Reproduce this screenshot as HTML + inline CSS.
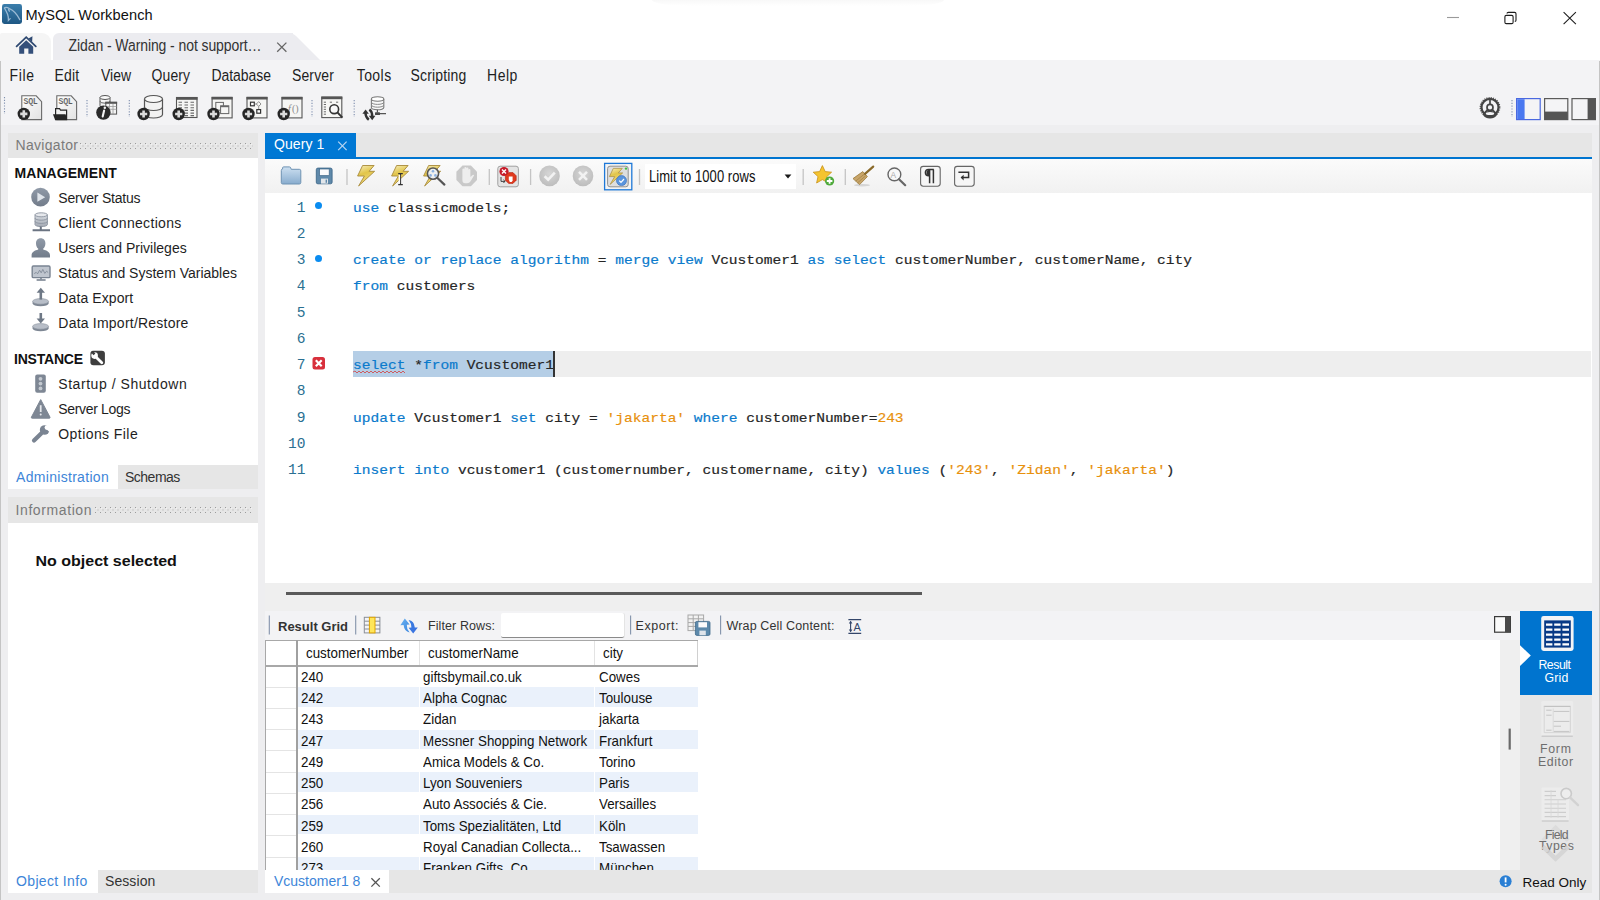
<!DOCTYPE html>
<html><head><meta charset="utf-8">
<style>
*{margin:0;padding:0;box-sizing:border-box}
html,body{width:1600px;height:900px;overflow:hidden}
body{position:relative;background:#eeeef0;font-family:"Liberation Sans",sans-serif;color:#1e1e1e}
.a{position:absolute}
.t{position:absolute;white-space:pre;line-height:1}
.g{font-size:14.3px;color:#111;transform:scaleX(0.935);transform-origin:0 0}
.mono{font-family:"Liberation Mono",monospace;-webkit-text-stroke:0.2px currentColor;transform:scaleY(0.93);transform-origin:0 11px}
svg{position:absolute;overflow:visible}
</style></head><body>

<!-- ===== title bar ===== -->
<div class="a" style="left:0;top:0;width:1600px;height:60px;background:#fff"></div>
<div class="a" style="left:2px;top:4px;width:19.5px;height:19.6px;border-radius:2.4px;background:linear-gradient(#3b7eac,#1f5884)"></div>
<span class="t" style="left:25.50px;top:8px;font-size:14.6px;color:#111;letter-spacing:0.107px;transform:scaleY(1.04);transform-origin:0 12.4px">MySQL Workbench</span>

<div class="a" style="left:652px;top:0;width:292px;height:6px;background:linear-gradient(#f8f8f8,#fff);border-radius:0 0 40px 40px/0 0 6px 6px"></div>
<!-- ===== tab strip ===== -->
<div class="a" style="left:0;top:33px;width:51px;height:27px;background:#f5f5f5;border-top-right-radius:9px;border-top-left-radius:2px"></div>
<div class="a" style="left:53px;top:33px;width:240px;height:27px;background:#ececf0;border-top-left-radius:6px"></div>
<svg style="left:0;top:0" width="1600" height="70"><path d="M288 33 Q293 33 296 36 L320 60 L288 60 Z" fill="#ececf0"/></svg>
<span class="t" style="left:68.60px;top:38.70px;font-size:14px;color:#333;letter-spacing:-0.090px;transform:scaleY(1.12);transform-origin:0 12px">Zidan - Warning - not support…</span>

<!-- title / tab icons -->
<svg style="left:0;top:0" width="1600" height="62">
<path d="M4.4 8Q6.2 6.6 9.4 8.6Q15.6 11.2 19.8 19.6M4.4 8Q6.4 11.4 7.6 14.2Q8.6 17 8.4 20.4L10.2 18.6M8.6 9.6L9.4 11.2" fill="none" stroke="#a6c2da" stroke-width="1.25" stroke-linecap="round" opacity="0.9"/>
<path d="M1447 17.5H1459" stroke="#9a9a9a" stroke-width="1.1"/>
<rect x="1504.9" y="15.4" width="8.2" height="8.2" rx="1.4" fill="none" stroke="#1e1e1e" stroke-width="1.1"/>
<path d="M1507 13.6Q1507 12.4 1508.4 12.4H1514.6Q1516 12.4 1516 13.8V20.2Q1516 21.4 1514.8 21.4" fill="none" stroke="#1e1e1e" stroke-width="1.1"/>
<path d="M1563.6 12.1L1575.9 24.1M1575.9 12.1L1563.6 24.1" stroke="#1e1e1e" stroke-width="1.1"/>
<!-- house -->
<path d="M16.6 46.4L26.2 37.2L35.8 46.4" fill="none" stroke="#2f4a72" stroke-width="1.8" stroke-linecap="round"/>
<path d="M29.6 38.6L31.8 37.4L31.6 40.6Z" fill="#2f4a72" stroke="#2f4a72" stroke-width="1.2"/>
<path d="M19.2 46.8L26.2 40.2L33.2 46.8V53.8H28.4V48.4H24.2V53.8H19.2Z" fill="#35507a"/>
<!-- tab close -->
<path d="M277.2 42.6L286.4 51.8M286.4 42.6L277.2 51.8" stroke="#666" stroke-width="1.3"/>
</svg>

<!-- ===== menu + toolbar bg ===== -->
<div class="a" style="left:0;top:60px;width:1600px;height:65px;background:#f3f3f5"></div>
<span class="t" style="left:9.50px;top:68.50px;font-size:14px;letter-spacing:0.700px;transform:scaleY(1.12);transform-origin:0 12px">File</span>
<span class="t" style="left:54.40px;top:68.50px;font-size:14px;letter-spacing:0.200px;transform:scaleY(1.12);transform-origin:0 12px">Edit</span>
<span class="t" style="left:101px;top:68.50px;font-size:14px;transform:scaleY(1.12);transform-origin:0 12px">View</span>
<span class="t" style="left:151.50px;top:68.50px;font-size:14px;letter-spacing:0.125px;transform:scaleY(1.12);transform-origin:0 12px">Query</span>
<span class="t" style="left:211.50px;top:68.50px;font-size:14px;letter-spacing:-0.071px;transform:scaleY(1.12);transform-origin:0 12px">Database</span>
<span class="t" style="left:292px;top:68.50px;font-size:14px;letter-spacing:0.120px;transform:scaleY(1.12);transform-origin:0 12px">Server</span>
<span class="t" style="left:356.70px;top:68.50px;font-size:14px;letter-spacing:0.450px;transform:scaleY(1.12);transform-origin:0 12px">Tools</span>
<span class="t" style="left:410.50px;top:68.50px;font-size:14px;letter-spacing:0.163px;transform:scaleY(1.12);transform-origin:0 12px">Scripting</span>
<span class="t" style="left:487px;top:68.50px;font-size:14px;letter-spacing:0.533px;transform:scaleY(1.12);transform-origin:0 12px">Help</span>

<!-- main toolbar icons -->
<svg style="left:0;top:0" width="1600" height="130">
<defs>
<linearGradient id="pg" x1="0" y1="0" x2="1" y2="1"><stop offset="0" stop-color="#ffffff"/><stop offset="1" stop-color="#e2e2e2"/></linearGradient>
<g id="plus"><circle cx="0" cy="0" r="6.2" fill="#262626"/><path d="M-3.6 0H3.6M0 -3.6V3.6" stroke="#dcdcdc" stroke-width="2.6"/></g>
<g id="win"><rect x="0.5" y="0.5" width="20" height="20.5" fill="#f6f6f4" stroke="#555" stroke-width="1.1"/><rect x="0" y="0" width="21" height="2.6" fill="#555"/></g>
<g id="sep"><path d="M0 0V17" stroke="#7f8fae" stroke-width="1.1" stroke-dasharray="1.2 1.6"/></g>
</defs>
<use href="#sep" x="4.5" y="97"/>
<use href="#sep" x="87" y="100"/>
<use href="#sep" x="129.3" y="100"/>
<use href="#sep" x="312" y="100"/>
<use href="#sep" x="354.2" y="100"/>
<use href="#sep" x="1512" y="100"/>
<!-- new sql -->
<path d="M21.8 95.8H36.2L41.6 101.6V119.6H21.8Z" fill="url(#pg)" stroke="#6a6a6a" stroke-width="1.1"/>
<text x="23.6" y="104.2" font-family="Liberation Mono" font-size="8.4" font-weight="bold" fill="#5a5a5a" letter-spacing="-0.4" stroke="#f4f4f4" stroke-width="0.15">SQL</text>
<use href="#plus" x="23.8" y="113.9"/>
<!-- open sql -->
<path d="M56.8 95.8H71.2L76.6 101.6V119.6H56.8Z" fill="url(#pg)" stroke="#6a6a6a" stroke-width="1.1"/>
<text x="58.6" y="104.2" font-family="Liberation Mono" font-size="8.4" font-weight="bold" fill="#5a5a5a" letter-spacing="-0.4" stroke="#f4f4f4" stroke-width="0.15">SQL</text>
<path d="M55.6 119.6V108.6H59.6L60.6 110.2H66.6V119.6Z" fill="#f0f0f0" stroke="#262626" stroke-width="1.2"/>
<path d="M53 114.2H65.6L67 119.8H55Z" fill="#262626"/>
<!-- db info -->
<path d="M100 97.5V105.5A5 2 0 0 0 110 105.5V97.5" fill="#f4f4f4" stroke="#555" stroke-width="1"/>
<ellipse cx="105" cy="97.5" rx="5" ry="2" fill="#fafafa" stroke="#555" stroke-width="1"/>
<path d="M100 101.2A5 2 0 0 0 110 101.2" fill="none" stroke="#555" stroke-width="0.9"/>
<rect x="105.8" y="102.3" width="10.8" height="11.8" fill="#f4f4f4" stroke="#555" stroke-width="1"/>
<rect x="105.3" y="101.8" width="11.8" height="2" fill="#555"/>
<path d="M106 106.5H116.5M106 109.3H116.5M109.5 104V114M113 104V114" stroke="#9a9a9a" stroke-width="0.8"/>
<circle cx="103.4" cy="112.6" r="7.2" fill="#2a2a2a"/>
<path d="M104.1 110.6L102.7 116.6" stroke="#f4f4f4" stroke-width="2.1" stroke-linecap="round"/>
<circle cx="104.8" cy="107.7" r="1.25" fill="#f4f4f4"/>
<!-- new schema -->
<path d="M144.5 99V114.5A9 3.5 0 0 0 162.5 114.5V99" fill="#f2f2f2" stroke="#555" stroke-width="1.2"/>
<ellipse cx="153.5" cy="99" rx="9" ry="3.5" fill="#f8f8f8" stroke="#555" stroke-width="1.2"/>
<path d="M144.5 107A9 3.5 0 0 0 162.5 107" fill="none" stroke="#555" stroke-width="1.2"/>
<use href="#plus" x="143.6" y="114"/>
<!-- new table -->
<rect x="176.5" y="97.5" width="20.5" height="20" fill="#f6f6f4" stroke="#555" stroke-width="1.1"/>
<rect x="176" y="97" width="21.5" height="2.8" fill="#555"/>
<path d="M178.5 102.3h3.5M184.5 102.3h3.5M190.5 102.3h3.5M178.5 105h3.5M184.5 105h3.5M190.5 105h3.5M178.5 107.7h3.5M184.5 107.7h3.5M190.5 107.7h3.5M178.5 110.4h3.5M184.5 110.4h3.5M190.5 110.4h3.5M184.5 113.1h3.5M190.5 113.1h3.5M184.5 115.6h3.5M190.5 115.6h3.5" stroke="#6a6a6a" stroke-width="1.1"/>
<use href="#plus" x="178.7" y="114"/>
<!-- new view -->
<use href="#win" x="211.6" y="96.9"/>
<rect x="215.8" y="102.4" width="7.6" height="7.8" fill="none" stroke="#666" stroke-width="1"/>
<rect x="220.6" y="105.8" width="8.2" height="7.8" fill="#f6f6f4" stroke="#666" stroke-width="1"/>
<rect x="220.6" y="105.8" width="8.2" height="1.4" fill="#666"/>
<use href="#plus" x="213.5" y="114"/>
<!-- new routine -->
<use href="#win" x="246.5" y="96.9"/>
<rect x="250.5" y="102.2" width="3.8" height="3.6" fill="#fff" stroke="#333" stroke-width="1.2"/>
<path d="M254.3 104H256.8M258.7 101.6L261 104L258.7 106.4L256.4 104Z M258.7 106.4V109.6" fill="none" stroke="#777" stroke-width="0.8"/>
<rect x="256.8" y="109.6" width="3.8" height="3.6" fill="#fff" stroke="#333" stroke-width="1.2"/>
<use href="#plus" x="248.5" y="114"/>
<!-- new function -->
<use href="#win" x="281.5" y="96.9"/>
<text x="288" y="112" font-family="Liberation Serif" font-style="italic" font-size="10" fill="#8a8a8a">f</text>
<text x="292" y="112" font-family="Liberation Serif" font-size="10" fill="#8a8a8a">()</text>
<use href="#plus" x="283.7" y="114"/>
<!-- search -->
<use href="#win" x="321.3" y="96.6"/>
<path d="M323.8 102.2h2.2M329.8 102.2h2.2M336 102.2h2.2M323.8 104.5h2.2M323.8 107h2.2M323.8 109.3h2.2M323.8 111.8h2.2M323.8 114.2h2.2" stroke="#6a6a6a" stroke-width="1"/>
<circle cx="334.2" cy="109.2" r="4.4" fill="#f8f8f8" stroke="#333" stroke-width="1.6"/>
<path d="M337.4 112.4L342.4 117.6" stroke="#333" stroke-width="2"/>
<!-- reconnect -->
<path d="M371.4 99V107.6A6.2 2.2 0 0 0 383.8 107.6V99" fill="#f8f8f8" stroke="#7a7a7a" stroke-width="1.1"/>
<ellipse cx="377.6" cy="99" rx="6.2" ry="2.2" fill="#fff" stroke="#7a7a7a" stroke-width="1.1"/>
<path d="M371.4 102.2A6.2 2.2 0 0 0 383.8 102.2M371.4 105A6.2 2.2 0 0 0 383.8 105" fill="none" stroke="#8a8a8a" stroke-width="1"/>
<path d="M377.4 109.8V112.6M379 113.6H386" stroke="#555" stroke-width="1.2"/>
<rect x="375" y="112.2" width="5" height="2.8" rx="0.6" fill="#4a4a4a"/>
<path d="M365.4 112.8Q365.6 117.4 368.8 119.8" fill="none" stroke="#333" stroke-width="2.4"/>
<path d="M362.4 113.8L365.6 109.4L368.8 113.8Z" fill="#333"/>
<path d="M369.4 109.4Q372.2 111.4 372.2 116.2" fill="none" stroke="#333" stroke-width="2.4"/>
<path d="M368.8 115.8L372.2 120.2L375.4 115.8Z" fill="#333"/>
<!-- right side gear and layout toggles -->
<circle cx="1490" cy="107.4" r="9.7" fill="none" stroke="#555" stroke-width="1.5" stroke-dasharray="1 1.2"/>
<circle cx="1490" cy="107.4" r="8.5" fill="none" stroke="#444" stroke-width="2.2"/>
<circle cx="1490" cy="107.4" r="3" fill="#f4f4f6" stroke="#444" stroke-width="1.7"/>
<path d="M1490 99.4V104.4M1487.8 109.6L1483.6 113.8M1492.2 109.6L1496.4 113.8" stroke="#444" stroke-width="1.7"/>
<path d="M1484.4 112.2Q1490 109.2 1495.6 112.2L1497.4 114.2A8.5 8.5 0 0 1 1482.6 114.2Z" fill="#444"/>
<ellipse cx="1490" cy="113.5" rx="4.2" ry="1.5" fill="#f4f4f6"/>
<rect x="1516.6" y="98.6" width="23.6" height="21" fill="#f4f4f6" stroke="#4a68e0" stroke-width="1.2"/>
<rect x="1517.2" y="99.2" width="7.4" height="19.8" fill="#4a78f0"/>
<rect x="1544.6" y="98.6" width="23.2" height="21" fill="#f4f4f6" stroke="#5a5a5a" stroke-width="1.2"/>
<rect x="1544.6" y="111.6" width="23.2" height="8" fill="#555"/>
<rect x="1572" y="98.6" width="23.4" height="21" fill="#f4f4f6" stroke="#5a5a5a" stroke-width="1.2"/>
<rect x="1587.6" y="98.6" width="7.8" height="21" fill="#555"/>
</svg>

<!-- window border lines -->
<div class="a" style="left:0;top:61px;width:1px;height:839px;background:#c4c4c4"></div>
<div class="a" style="left:1599px;top:61px;width:1px;height:839px;background:#c4c4c4"></div>

<!-- ===== navigator ===== -->
<div class="a" style="left:8px;top:133px;width:250px;height:25px;background:#e6e6e6"></div>
<span class="t" style="left:15.50px;top:138px;font-size:14px;color:#7a7a7a;letter-spacing:0.312px">Navigator</span>
<svg style="left:0;top:0" width="260" height="600"><defs><pattern id="dp143" x="80" y="143" width="5" height="5" patternUnits="userSpaceOnUse"><rect x="0" y="0" width="1" height="1" fill="#9c9c9c"/><rect x="1" y="1" width="1" height="1" fill="#f2f2f2"/><rect x="2.5" y="2.5" width="1" height="1" fill="#b0b0b0"/></pattern></defs><rect x="80" y="143" width="173" height="6" fill="url(#dp143)"/></svg>
<div class="a" style="left:8px;top:158px;width:250px;height:307px;background:#fff"></div>
<!-- navigator icons -->
<svg style="left:0;top:0" width="260" height="450">
<defs>
<linearGradient id="ng" x1="0" y1="0" x2="0" y2="1"><stop offset="0" stop-color="#909aa8"/><stop offset="1" stop-color="#727c8a"/></linearGradient>
<linearGradient id="nl" x1="0" y1="0" x2="0" y2="1"><stop offset="0" stop-color="#d8dce2"/><stop offset="1" stop-color="#a4aab4"/></linearGradient>
</defs>
<!-- server status -->
<circle cx="40.5" cy="197.1" r="9.3" fill="url(#ng)"/>
<path d="M37.4 192.6L45.2 197.2L37.4 201.8Z" fill="#dfe4ea"/>
<!-- client connections -->
<path d="M35 214.8V224.6A6.2 2 0 0 0 47.4 224.6V214.8" fill="url(#nl)" stroke="#8a929e" stroke-width="0.9"/>
<ellipse cx="41.2" cy="214.8" rx="6.2" ry="2" fill="#e6e8ec" stroke="#8a929e" stroke-width="0.9"/>
<path d="M35 218.2A6.2 2 0 0 0 47.4 218.2M35 221.4A6.2 2 0 0 0 47.4 221.4" fill="none" stroke="#8a929e" stroke-width="0.9"/>
<path d="M40.8 226.4V230M32.6 230.2H50" stroke="#6b7482" stroke-width="2"/>
<!-- users -->
<path d="M40.7 238.2C37.6 238.2 36 240.4 36 243.4C36 246 37.2 248 38.2 248.6V249.6C35 250.6 31.6 252 31.6 255.2V257.4H50V255.2C50 252 46.4 250.6 43.2 249.6V248.6C44.2 248 45.4 246 45.4 243.4C45.4 240.4 43.8 238.2 40.7 238.2Z" fill="url(#ng)"/>
<!-- status variables monitor -->
<rect x="32.2" y="266" width="17.8" height="11.6" rx="1.2" fill="#bfc5ce" stroke="#7a8492" stroke-width="1.4"/>
<path d="M34.2 273.6L36.2 272.4L37.6 273.8L39.6 270.2L41.2 272.8L42.8 269.4L44.8 273.4L46.6 271.2L48.2 272.6" fill="none" stroke="#7a8492" stroke-width="0.8"/>
<path d="M41 277.6V279.4" stroke="#7a8492" stroke-width="1.6"/>
<rect x="36.6" y="279.2" width="9" height="1.6" fill="#7a8492"/>
<!-- data export -->
<path d="M32.6 301.4V303.6A8 2.6 0 0 0 48.6 303.6V301.4" fill="#7e8794"/>
<ellipse cx="40.6" cy="301.4" rx="8" ry="2.8" fill="#b8bec8" stroke="#8a929e" stroke-width="0.6"/>
<path d="M40.8 299.6V291.6" stroke="#6e7886" stroke-width="2.6"/>
<path d="M36.6 292.8L40.8 287.8L45 292.8Z" fill="#6e7886"/>
<!-- data import -->
<path d="M32.6 326.4V328.6A8 2.6 0 0 0 48.6 328.6V326.4" fill="#7e8794"/>
<ellipse cx="40.6" cy="326.4" rx="8" ry="2.8" fill="#b8bec8" stroke="#8a929e" stroke-width="0.6"/>
<path d="M40.8 313V320" stroke="#6e7886" stroke-width="2.6"/>
<path d="M36.6 318.6L40.8 323.6L45 318.6Z" fill="#6e7886"/>
<!-- instance wrench box -->
<rect x="90.4" y="350.7" width="14.5" height="14.6" rx="3" fill="#3e3e3e"/>
<path d="M96.2 357.2L101.8 362.8" stroke="#fff" stroke-width="2.8" stroke-linecap="round"/>
<circle cx="94.6" cy="355.6" r="3.3" fill="#fff"/>
<path d="M91 352.6L93.6 355.2L95.4 353.4L92.8 350.8Z" fill="#3e3e3e"/>
<!-- startup -->
<rect x="35.2" y="374.4" width="10.6" height="18.4" rx="2" fill="#7e8794"/>
<circle cx="40.5" cy="378.8" r="1.9" fill="#c4c9d0"/><circle cx="40.5" cy="383.6" r="1.9" fill="#c4c9d0"/><circle cx="40.5" cy="388.4" r="1.9" fill="#c4c9d0"/>
<!-- server logs -->
<path d="M40.7 399.6L50 417.2Q50.4 418.2 49.2 418.2H32.2Q31 418.2 31.4 417.2Z" fill="#7e8794" stroke="#7e8794" stroke-width="1" stroke-linejoin="round"/>
<path d="M40.7 405.2V412" stroke="#e6e8ec" stroke-width="1.8"/>
<circle cx="40.7" cy="414.6" r="1" fill="#e6e8ec"/>
<!-- options file wrench -->
<path d="M34 440.6L41.2 433.4" stroke="#7a8492" stroke-width="4.2" stroke-linecap="round"/>
<circle cx="44.6" cy="430" r="4.8" fill="#7a8492"/>
<circle cx="47" cy="427.6" r="2.4" fill="#fff"/>
<path d="M47 425.2L51.6 429.8L49.4 432L44.8 427.4Z" fill="#fff"/>
</svg>

<span class="t" style="left:14.50px;top:166px;font-size:14px;font-weight:bold;color:#111;letter-spacing:0.056px">MANAGEMENT</span>
<span class="t" style="left:58.30px;top:191px;font-size:14px;letter-spacing:-0.208px">Server Status</span>
<span class="t" style="left:58.30px;top:216px;font-size:14px;letter-spacing:0.324px">Client Connections</span>
<span class="t" style="left:58.30px;top:241px;font-size:14px">Users and Privileges</span>
<span class="t" style="left:58.30px;top:266px;font-size:14px">Status and System Variables</span>
<span class="t" style="left:58.30px;top:291px;font-size:14px;letter-spacing:0.100px">Data Export</span>
<span class="t" style="left:58.30px;top:316px;font-size:14px;letter-spacing:0.222px">Data Import/Restore</span>
<span class="t" style="left:14.00px;top:352px;font-size:14px;font-weight:bold;color:#111;letter-spacing:-0.214px">INSTANCE</span>
<span class="t" style="left:58.30px;top:377px;font-size:14px;letter-spacing:0.547px">Startup / Shutdown</span>
<span class="t" style="left:58.30px;top:402px;font-size:14px;letter-spacing:-0.330px">Server Logs</span>
<span class="t" style="left:58.30px;top:427px;font-size:14px;letter-spacing:0.427px">Options File</span>
<!-- admin/schemas tabs -->
<div class="a" style="left:8px;top:465px;width:110px;height:24px;background:#fff"></div>
<div class="a" style="left:118px;top:465px;width:140px;height:24px;background:#e6e6e6"></div>
<span class="t" style="left:16px;top:470px;font-size:14px;color:#3d85d8;letter-spacing:0.308px">Administration</span>
<span class="t" style="left:125.00px;top:470px;font-size:14px;color:#333;letter-spacing:-0.500px">Schemas</span>
<!-- information -->
<div class="a" style="left:8px;top:497px;width:250px;height:26px;background:#e6e6e6"></div>
<span class="t" style="left:15.50px;top:502.5px;font-size:14px;color:#7a7a7a;letter-spacing:0.600px">Information</span>
<svg style="left:0;top:0" width="260" height="600"><defs><pattern id="dp507" x="95" y="507" width="5" height="5" patternUnits="userSpaceOnUse"><rect x="0" y="0" width="1" height="1" fill="#9c9c9c"/><rect x="1" y="1" width="1" height="1" fill="#f2f2f2"/><rect x="2.5" y="2.5" width="1" height="1" fill="#b0b0b0"/></pattern></defs><rect x="95" y="507" width="157" height="6" fill="url(#dp507)"/></svg>
<div class="a" style="left:8px;top:523px;width:250px;height:347px;background:#fff"></div>
<span class="t" style="left:35.50px;top:553.3px;font-size:16px;font-weight:bold;color:#111;transform:scaleY(0.92);transform-origin:0 13.5px">No object selected</span>
<div class="a" style="left:8px;top:870px;width:90px;height:23px;background:#fff"></div>
<div class="a" style="left:98px;top:870px;width:160px;height:23px;background:#e6e6e6"></div>
<span class="t" style="left:16.00px;top:874px;font-size:14px;color:#3d85d8;letter-spacing:0.350px">Object Info</span>
<span class="t" style="left:105.00px;top:874px;font-size:14px;color:#333;letter-spacing:0.083px">Session</span>

<!-- ===== query tab strip ===== -->
<div class="a" style="left:265px;top:133px;width:1327px;height:24px;background:#e6e6e6"></div>
<div class="a" style="left:265px;top:133px;width:91px;height:26px;background:#0078d4"></div>
<div class="a" style="left:265px;top:156.7px;width:1327px;height:2.6px;background:#0075d0"></div>
<span class="t" style="left:274px;top:137px;font-size:14px;color:#fff;letter-spacing:0.083px;transform:scaleY(1.07);transform-origin:0 12px">Query 1</span>
<svg style="left:0;top:0" width="400" height="160"><path d="M338.2 141.6L346.6 150.2M346.6 141.6L338.2 150.2" stroke="#b8d6f2" stroke-width="1.2"/></svg>

<!-- ===== editor toolbar ===== -->
<div class="a" style="left:265px;top:159px;width:1327px;height:34px;background:linear-gradient(#fbfbfb,#f1f1f1)"></div>
<div class="a" style="left:645px;top:164px;width:151px;height:25px;background:#fff"></div>
<span class="t" style="left:649.00px;top:170.60px;font-size:13px;color:#111;letter-spacing:0.059px;transform:scaleY(1.29);transform-origin:0 11px">Limit to 1000 rows</span>

<!-- editor toolbar icons -->
<svg style="left:0;top:0" width="1600" height="200">
<defs>
<linearGradient id="fold" x1="0" y1="0" x2="0" y2="1"><stop offset="0" stop-color="#cde0f1"/><stop offset="1" stop-color="#88acce"/></linearGradient>
<linearGradient id="bolt" x1="0" y1="0" x2="0.3" y2="1"><stop offset="0" stop-color="#f7efc0"/><stop offset="0.45" stop-color="#e2c54a"/><stop offset="1" stop-color="#f0dc80"/></linearGradient>
<g id="bl"><path d="M5 0.5H16.5L11.5 6.3H17L1 21L6.8 11H0Z" fill="url(#bolt)" stroke="#a88a3a" stroke-width="0.9" stroke-linejoin="round"/></g>
<radialGradient id="gc" cx="0.5" cy="0.4" r="0.6"><stop offset="0" stop-color="#d6d6d6"/><stop offset="1" stop-color="#bdbdbd"/></radialGradient>
</defs>
<!-- folder -->
<path d="M282.6 169V167.9Q282.6 166.9 283.6 166.9H289.4Q290.4 166.9 290.8 168L291.2 169.3H299.3Q300.8 169.3 300.8 170.8V182.6Q300.8 184 299.3 184H282.8Q281.3 184 281.3 182.6V170.5Q281.3 169 282.6 169Z" fill="url(#fold)" stroke="#6f93b3" stroke-width="1"/>
<!-- floppy -->
<rect x="316.3" y="168.1" width="15.8" height="15.7" rx="1.6" fill="#5f89aa" stroke="#40698a" stroke-width="0.9"/>
<rect x="319.6" y="169" width="9.6" height="6.6" fill="#fbfbfc" stroke="#40698a" stroke-width="0.7"/>
<rect x="321" y="178.6" width="7" height="5" fill="#e2e6ea"/>
<rect x="325.6" y="179.6" width="1.4" height="3.2" fill="#5f89aa"/>
<path d="M347 169V185" stroke="#c4c4c4" stroke-width="1.3"/>
<!-- bolts -->
<use href="#bl" x="357.6" y="165"/>
<use href="#bl" x="391.6" y="165"/>
<path d="M398.2 173.6H402.8M398.2 184.6H402.8M400.5 173.6V184.6" stroke="#333" stroke-width="1.2"/>
<path d="M399.4 174.8V183.4" stroke="#fff" stroke-width="1.4"/>
<use href="#bl" x="423.6" y="165"/>
<circle cx="433" cy="173.6" r="5.6" fill="#eef0f0" stroke="#555" stroke-width="1.6"/>
<circle cx="433" cy="171.2" r="1.3" fill="#8ab0e0"/><circle cx="430.6" cy="175.4" r="1.3" fill="#8ab0e0"/><circle cx="435.4" cy="175.4" r="1.3" fill="#8ab0e0"/>
<path d="M437.2 177.8L444.4 184.6" stroke="#555" stroke-width="2.2" stroke-linecap="round"/>
<!-- stop (disabled) -->
<path d="M462.5 165.6H470.9L477 171.7V180.1L470.9 186.2H462.5L456.4 180.1V171.7Z" fill="#c9c9c9"/>
<path d="M462.4 176.4V169.6Q462.4 168.6 463.4 168.6Q464.4 168.6 464.4 169.6V174.6V168Q464.4 167 465.4 167Q466.4 167 466.4 168V174.6V168.4Q466.4 167.4 467.4 167.4Q468.4 167.4 468.4 168.4V174.8V170Q468.4 169 469.4 169Q470.4 169 470.4 170V177L472.6 175Q473.6 174.4 474.2 175.2L470.6 181.2Q469.4 183.2 467 183.2H465.2Q462.4 183.2 462.4 180Z" fill="#eeeeee"/>
<path d="M489.3 169V185" stroke="#c4c4c4" stroke-width="1.3"/>
<!-- stop on error toggle -->
<rect x="497.8" y="166.2" width="20.6" height="20.6" rx="2.4" fill="#e4e4e4" stroke="#a0a0a0" stroke-width="1"/>
<circle cx="504" cy="171.5" r="4.6" fill="#c61b2a"/>
<path d="M502 169.5L506 173.5M506 169.5L502 173.5" stroke="#fff" stroke-width="1.4"/>
<path d="M508.6 172.6H513L516.2 175.8V180.2L513 183.4H508.6L505.4 180.2V175.8Z" fill="#e03a1e" stroke="#b02010" stroke-width="0.6"/>
<path d="M508.8 179.6V176.4H512.6V180.8L511.6 182H509.8Z" fill="#fff"/>
<path d="M501 177V181.4H505M503.4 179.8L505 181.4L503.4 183" fill="none" stroke="#333" stroke-width="0.9"/>
<path d="M530.6 169V185" stroke="#c4c4c4" stroke-width="1.3"/>
<!-- commit / rollback (disabled) -->
<circle cx="549.5" cy="175.9" r="10.3" fill="url(#gc)"/>
<path d="M544.6 176.2L548.2 179.6L554.8 172.6" fill="none" stroke="#f2f2f2" stroke-width="2.6"/>
<circle cx="583" cy="175.9" r="10.3" fill="url(#gc)"/>
<path d="M579 171.9L587 179.9M587 171.9L579 179.9" stroke="#f2f2f2" stroke-width="2.6"/>
<!-- autocommit toggle -->
<rect x="604.6" y="163.4" width="27.2" height="26.4" fill="#f4f4f4" stroke="#1e78d8" stroke-width="1.3"/>
<rect x="607.6" y="166.2" width="20.6" height="20.6" rx="2.4" fill="#dedede" stroke="#909090" stroke-width="1"/>
<g transform="translate(609.4,168) scale(0.78)"><path d="M5 0.5H16.5L11.5 6.3H17L1 21L6.8 11H0Z" fill="url(#bolt)" stroke="#a88a3a" stroke-width="0.9"/></g>
<circle cx="621.5" cy="180.6" r="5" fill="#5b95dd" stroke="#3f74c0" stroke-width="0.7"/>
<path d="M619.2 180.6L621 182.3L624 179" fill="none" stroke="#fff" stroke-width="1.2"/>
<circle cx="626" cy="168.6" r="1.2" fill="#40c040"/>
<path d="M639.5 169V185" stroke="#c4c4c4" stroke-width="1.3"/>
<!-- limit dropdown arrow -->
<path d="M784.6 174.6H791.4L788 178.4Z" fill="#1a1a1a"/>
<path d="M803.2 169V185" stroke="#c4c4c4" stroke-width="1.3"/>
<!-- star plus -->
<path d="M822.4 165.6L825.2 171.6L831.6 172.2L826.8 176.6L828.2 183L822.4 179.6L816.6 183L818 176.6L813.2 172.2L819.6 171.6Z" fill="#f4c430" stroke="#c8921a" stroke-width="0.8" stroke-linejoin="round"/>
<circle cx="829.6" cy="181" r="4.6" fill="#4faa3c"/>
<path d="M826.8 181H832.4M829.6 178.2V183.8" stroke="#fff" stroke-width="1.8"/>
<path d="M845.3 169V185" stroke="#c4c4c4" stroke-width="1.3"/>
<!-- broom -->
<ellipse cx="862" cy="185.2" rx="8" ry="1.3" fill="#c8c8c8" opacity="0.7"/>
<path d="M853 178.6L862.8 171.6L867.4 176.6L859.6 184.6Z" fill="#c8a56a" stroke="#9a7a3a" stroke-width="0.8"/>
<path d="M855.6 181.2L864 174.4M857.4 183L865.6 175.8" stroke="#9a7a3a" stroke-width="0.6"/>
<path d="M865 173.8L873.2 166.6" stroke="#8a6a2a" stroke-width="2.2" stroke-linecap="round"/>
<!-- find -->
<circle cx="894.4" cy="174.4" r="6.4" fill="#f8f8f8" stroke="#666" stroke-width="1.4"/>
<text x="890.6" y="177.6" font-family="Liberation Sans" font-size="8.4" fill="#aaa">A</text>
<path d="M899 179.2L905.2 185.2" stroke="#666" stroke-width="2.2" stroke-linecap="round"/>
<!-- pilcrow -->
<rect x="920.6" y="166.4" width="19.6" height="19.8" rx="2.6" fill="#f6f6f6" stroke="#666" stroke-width="1.1"/>
<path d="M929.6 169.4V183.2M933.4 169.4V183.2M933.8 169.4H928.6A3.2 3.2 0 0 0 928.6 175.8H929.6" fill="none" stroke="#333" stroke-width="1.5"/>
<path d="M926.5 172.6A2.6 2.6 0 0 0 929.4 175.6V169.8A2.6 2.6 0 0 0 926.5 172.6Z" fill="#333"/>
<!-- word wrap -->
<rect x="954.6" y="166.4" width="19.6" height="19.8" rx="2.6" fill="#f6f6f6" stroke="#666" stroke-width="1.1"/>
<path d="M958.4 172.2H968.6V177.6H961.6" fill="none" stroke="#333" stroke-width="1.5"/>
<path d="M963.6 174.8L960.6 177.6L963.6 180.4Z" fill="#333"/>
</svg>

<!-- ===== editor ===== -->
<div class="a" style="left:265px;top:193px;width:1327px;height:390px;background:#fff"></div>
<!-- code -->
<div class="a" style="left:553px;top:350.5px;width:1038px;height:26.3px;background:#eeeeee"></div>
<div class="a" style="left:352.5px;top:350.5px;width:201px;height:26.3px;background:#b5cee6"></div>
<span class="t mono" style="-webkit-text-stroke:0;transform:none;left:265px;width:40.5px;text-align:right;top:200.50px;font-size:14.57px;color:#2a7092">1</span>
<span class="t mono" style="left:353px;top:200.50px;font-size:14.57px;color:#262626"><span style="color:#0a7acc">use</span> classicmodels;</span>
<span class="t mono" style="-webkit-text-stroke:0;transform:none;left:265px;width:40.5px;text-align:right;top:226.75px;font-size:14.57px;color:#2a7092">2</span>
<span class="t mono" style="-webkit-text-stroke:0;transform:none;left:265px;width:40.5px;text-align:right;top:253.00px;font-size:14.57px;color:#2a7092">3</span>
<span class="t mono" style="left:353px;top:253.00px;font-size:14.57px;color:#262626"><span style="color:#0a7acc">create</span> <span style="color:#0a7acc">or</span> <span style="color:#0a7acc">replace</span> <span style="color:#0a7acc">algorithm</span> = <span style="color:#0a7acc">merge</span> <span style="color:#0a7acc">view</span> Vcustomer1 <span style="color:#0a7acc">as</span> <span style="color:#0a7acc">select</span> customerNumber, customerName, city</span>
<span class="t mono" style="-webkit-text-stroke:0;transform:none;left:265px;width:40.5px;text-align:right;top:279.25px;font-size:14.57px;color:#2a7092">4</span>
<span class="t mono" style="left:353px;top:279.25px;font-size:14.57px;color:#262626"><span style="color:#0a7acc">from</span> customers</span>
<span class="t mono" style="-webkit-text-stroke:0;transform:none;left:265px;width:40.5px;text-align:right;top:305.50px;font-size:14.57px;color:#2a7092">5</span>
<span class="t mono" style="-webkit-text-stroke:0;transform:none;left:265px;width:40.5px;text-align:right;top:331.75px;font-size:14.57px;color:#2a7092">6</span>
<span class="t mono" style="-webkit-text-stroke:0;transform:none;left:265px;width:40.5px;text-align:right;top:358.00px;font-size:14.57px;color:#2a7092">7</span>
<span class="t mono" style="left:353px;top:358.00px;font-size:14.57px;color:#262626"><span style="color:#0a7acc">select</span> *<span style="color:#0a7acc">from</span> Vcustomer1</span>
<span class="t mono" style="-webkit-text-stroke:0;transform:none;left:265px;width:40.5px;text-align:right;top:384.25px;font-size:14.57px;color:#2a7092">8</span>
<span class="t mono" style="-webkit-text-stroke:0;transform:none;left:265px;width:40.5px;text-align:right;top:410.50px;font-size:14.57px;color:#2a7092">9</span>
<span class="t mono" style="left:353px;top:410.50px;font-size:14.57px;color:#262626"><span style="color:#0a7acc">update</span> Vcustomer1 <span style="color:#0a7acc">set</span> city = <span style="color:#e8900c">'jakarta'</span> <span style="color:#0a7acc">where</span> customerNumber=<span style="color:#e8900c">243</span></span>
<span class="t mono" style="-webkit-text-stroke:0;transform:none;left:265px;width:40.5px;text-align:right;top:436.75px;font-size:14.57px;color:#2a7092">10</span>
<span class="t mono" style="-webkit-text-stroke:0;transform:none;left:265px;width:40.5px;text-align:right;top:463.00px;font-size:14.57px;color:#2a7092">11</span>
<span class="t mono" style="left:353px;top:463.00px;font-size:14.57px;color:#262626"><span style="color:#0a7acc">insert</span> <span style="color:#0a7acc">into</span> vcustomer1 (customernumber, customername, city) <span style="color:#0a7acc">values</span> (<span style="color:#e8900c">'243'</span>, <span style="color:#e8900c">'Zidan'</span>, <span style="color:#e8900c">'jakarta'</span>)</span>
<div class="a" style="left:552.8px;top:350.6px;width:2px;height:26px;background:#333"></div>
<div class="a" style="left:315.25px;top:202px;width:7px;height:7px;border-radius:50%;background:#0a8cf0"></div>
<div class="a" style="left:315.25px;top:254.5px;width:7px;height:7px;border-radius:50%;background:#0a8cf0"></div>
<svg style="left:312px;top:356px" width="14" height="14"><rect x="0.5" y="1" width="12.5" height="12.5" rx="2.5" fill="#d8303c"/><path d="M3.8 4.3 L9.7 10.2 M9.7 4.3 L3.8 10.2" stroke="#fff" stroke-width="2.2"/></svg>
<svg style="left:353px;top:370px" width="54" height="4"><path d="M0 2 L2 1 L4 3 L6 1 L8 3 L10 1 L12 3 L14 1 L16 3 L18 1 L20 3 L22 1 L24 3 L26 1 L28 3 L30 1 L32 3 L34 1 L36 3 L38 1 L40 3 L42 1 L44 3 L46 1 L48 3 L50 1 L52 3" stroke="#d04040" stroke-width="0.8" fill="none"/></svg>

<!-- ===== scroll area ===== -->
<div class="a" style="left:265px;top:583px;width:1327px;height:28px;background:#efefef"></div>
<div class="a" style="left:286px;top:592px;width:636px;height:3px;background:#5a5a5a"></div>

<!-- ===== result toolbar ===== -->
<div class="a" style="left:265px;top:611px;width:1255px;height:29px;background:#f3f3f5"></div>
<span class="t" style="left:278.00px;top:620px;font-size:13px;font-weight:bold;color:#333">Result Grid</span>
<span class="t" style="left:428.00px;top:620px;font-size:12.5px;color:#333;letter-spacing:0.091px">Filter Rows:</span>
<div class="a" style="left:501px;top:613px;width:123px;height:24.5px;background:#fff;border-radius:2px;border-bottom:1.5px solid #8a8a8a;box-shadow:1px 0 0 #e4e4e4"></div>
<span class="t" style="left:635.50px;top:620px;font-size:12.5px;color:#333;letter-spacing:0.583px">Export:</span>
<span class="t" style="left:726.50px;top:620px;font-size:12.5px;color:#333;letter-spacing:0.147px">Wrap Cell Content:</span>

<!-- ===== grid ===== -->
<div class="a" style="left:265px;top:640px;width:1235px;height:230px;background:#fff"></div>
<!-- grid -->
<div class="a" style="left:265px;top:640px;width:1235px;height:230px;overflow:hidden">
<div class="a" style="left:1px;top:46.50px;width:30px;height:1px;background:#e4e4e4"></div>
<span class="t g" style="left:36.25px;top:29.80px">240</span>
<span class="t g" style="left:158.39999999999998px;top:29.80px">giftsbymail.co.uk</span>
<span class="t g" style="left:333.5px;top:29.80px">Cowes</span>
<div class="a" style="left:33px;top:47.00px;width:121px;height:19.6px;background:#eaf1fb"></div>
<div class="a" style="left:155px;top:47.00px;width:174px;height:19.6px;background:#eaf1fb"></div>
<div class="a" style="left:330px;top:47.00px;width:103px;height:19.6px;background:#eaf1fb"></div>
<div class="a" style="left:1px;top:67.75px;width:30px;height:1px;background:#e4e4e4"></div>
<span class="t g" style="left:36.25px;top:51.05px">242</span>
<span class="t g" style="left:158.39999999999998px;top:51.05px">Alpha Cognac</span>
<span class="t g" style="left:333.5px;top:51.05px">Toulouse</span>
<div class="a" style="left:1px;top:89.00px;width:30px;height:1px;background:#e4e4e4"></div>
<span class="t g" style="left:36.25px;top:72.30px">243</span>
<span class="t g" style="left:158.39999999999998px;top:72.30px">Zidan</span>
<span class="t g" style="left:333.5px;top:72.30px">jakarta</span>
<div class="a" style="left:33px;top:89.50px;width:121px;height:19.6px;background:#eaf1fb"></div>
<div class="a" style="left:155px;top:89.50px;width:174px;height:19.6px;background:#eaf1fb"></div>
<div class="a" style="left:330px;top:89.50px;width:103px;height:19.6px;background:#eaf1fb"></div>
<div class="a" style="left:1px;top:110.25px;width:30px;height:1px;background:#e4e4e4"></div>
<span class="t g" style="left:36.25px;top:93.55px">247</span>
<span class="t g" style="left:158.39999999999998px;top:93.55px">Messner Shopping Network</span>
<span class="t g" style="left:333.5px;top:93.55px">Frankfurt</span>
<div class="a" style="left:1px;top:131.50px;width:30px;height:1px;background:#e4e4e4"></div>
<span class="t g" style="left:36.25px;top:114.80px">249</span>
<span class="t g" style="left:158.39999999999998px;top:114.80px">Amica Models &amp; Co.</span>
<span class="t g" style="left:333.5px;top:114.80px">Torino</span>
<div class="a" style="left:33px;top:132.00px;width:121px;height:19.6px;background:#eaf1fb"></div>
<div class="a" style="left:155px;top:132.00px;width:174px;height:19.6px;background:#eaf1fb"></div>
<div class="a" style="left:330px;top:132.00px;width:103px;height:19.6px;background:#eaf1fb"></div>
<div class="a" style="left:1px;top:152.75px;width:30px;height:1px;background:#e4e4e4"></div>
<span class="t g" style="left:36.25px;top:136.05px">250</span>
<span class="t g" style="left:158.39999999999998px;top:136.05px">Lyon Souveniers</span>
<span class="t g" style="left:333.5px;top:136.05px">Paris</span>
<div class="a" style="left:1px;top:174.00px;width:30px;height:1px;background:#e4e4e4"></div>
<span class="t g" style="left:36.25px;top:157.30px">256</span>
<span class="t g" style="left:158.39999999999998px;top:157.30px">Auto Associés &amp; Cie.</span>
<span class="t g" style="left:333.5px;top:157.30px">Versailles</span>
<div class="a" style="left:33px;top:174.50px;width:121px;height:19.6px;background:#eaf1fb"></div>
<div class="a" style="left:155px;top:174.50px;width:174px;height:19.6px;background:#eaf1fb"></div>
<div class="a" style="left:330px;top:174.50px;width:103px;height:19.6px;background:#eaf1fb"></div>
<div class="a" style="left:1px;top:195.25px;width:30px;height:1px;background:#e4e4e4"></div>
<span class="t g" style="left:36.25px;top:178.55px">259</span>
<span class="t g" style="left:158.39999999999998px;top:178.55px">Toms Spezialitäten, Ltd</span>
<span class="t g" style="left:333.5px;top:178.55px">Köln</span>
<div class="a" style="left:1px;top:216.50px;width:30px;height:1px;background:#e4e4e4"></div>
<span class="t g" style="left:36.25px;top:199.80px">260</span>
<span class="t g" style="left:158.39999999999998px;top:199.80px">Royal Canadian Collecta...</span>
<span class="t g" style="left:333.5px;top:199.80px">Tsawassen</span>
<div class="a" style="left:33px;top:217.00px;width:121px;height:19.6px;background:#eaf1fb"></div>
<div class="a" style="left:155px;top:217.00px;width:174px;height:19.6px;background:#eaf1fb"></div>
<div class="a" style="left:330px;top:217.00px;width:103px;height:19.6px;background:#eaf1fb"></div>
<div class="a" style="left:1px;top:237.75px;width:30px;height:1px;background:#e4e4e4"></div>
<span class="t g" style="left:36.25px;top:221.05px">273</span>
<span class="t g" style="left:158.39999999999998px;top:221.05px">Franken Gifts, Co</span>
<span class="t g" style="left:333.5px;top:221.05px">München</span>
<div class="a" style="left:0;top:0;width:433px;height:1px;background:#a8a8a8"></div>
<div class="a" style="left:0;top:24.799999999999955px;width:433px;height:1.8px;background:#a8a8a8"></div>
<div class="a" style="left:154px;top:1px;width:1px;height:24px;background:#e3e3e3"></div>
<div class="a" style="left:329px;top:1px;width:1px;height:24px;background:#e3e3e3"></div>
<div class="a" style="left:432px;top:1px;width:1px;height:24px;background:#d0d0d0"></div>
<span class="t g" style="left:40.60000000000002px;top:5.90px">customerNumber</span>
<span class="t g" style="left:163.2px;top:5.90px">customerName</span>
<span class="t g" style="left:338px;top:5.90px">city</span>
<div class="a" style="left:0;top:0;width:1px;height:230px;background:#a8a8a8"></div>
<div class="a" style="left:31px;top:0;width:1.5px;height:230px;background:#a0a0a0"></div>
</div>

<!-- ===== right side panel ===== -->
<div class="a" style="left:1500px;top:640px;width:20px;height:230px;background:#efefef"></div>
<div class="a" style="left:1520px;top:611px;width:72px;height:84px;background:#0074cf"></div>
<div class="a" style="left:1520px;top:695px;width:72px;height:175px;background:#e6e6e6"></div>

<span class="t" style="left:1538.40px;top:659px;font-size:12.3px;color:#fff;letter-spacing:-0.460px">Result</span>
<span class="t" style="left:1544.40px;top:671.5px;font-size:12.3px;color:#fff;letter-spacing:0.267px">Grid</span>
<span class="t" style="left:1540.00px;top:742.6px;font-size:12.3px;color:#6e6e6e;letter-spacing:0.733px">Form</span>
<span class="t" style="left:1538.00px;top:756.4px;font-size:12.3px;color:#6e6e6e;letter-spacing:0.600px">Editor</span>
<svg style="left:0;top:0" width="1600" height="900"><path d="M1543 840.6L1555.6 827.6L1568.2 840.6" fill="none" stroke="#dadada" stroke-width="4" opacity="0.9"/></svg>
<span class="t" style="left:1545.00px;top:828.8px;font-size:12.3px;color:#6e6e6e;letter-spacing:-0.750px">Field</span>
<span class="t" style="left:1539px;top:840px;font-size:12.3px;color:#6e6e6e;letter-spacing:0.500px">Types</span>
<!-- ===== bottom tabs / status ===== -->
<!--STATUSBG-->
<div class="a" style="left:265px;top:870px;width:1327px;height:23px;background:#e6e6e6"></div>
<div class="a" style="left:265px;top:870px;width:124px;height:23px;background:#fff"></div>
<span class="t" style="left:274px;top:874px;font-size:14px;color:#3d85d8">Vcustomer1 8</span>
<span class="t" style="left:1522.50px;top:875.5px;font-size:13.5px;color:#111">Read Only</span>

<!-- result toolbar & right panel icons -->
<svg style="left:0;top:0" width="1600" height="900">
<defs>
<linearGradient id="rf1" x1="0" y1="0" x2="1" y2="1"><stop offset="0" stop-color="#6ab2f0"/><stop offset="1" stop-color="#3a86e0"/></linearGradient>
<linearGradient id="rf2" x1="0" y1="0" x2="1" y2="1"><stop offset="0" stop-color="#3a7ee0"/><stop offset="1" stop-color="#3a70e0"/></linearGradient>
</defs>
<path d="M269.3 615.6V634.4" stroke="#8392aa" stroke-width="1.1"/>
<path d="M355.7 615.6V634.4" stroke="#8392aa" stroke-width="1.1"/>
<!-- columns icon -->
<rect x="364.3" y="617.3" width="15.6" height="15.6" fill="#f4f4f6" stroke="#8a8e96" stroke-width="1"/>
<path d="M364.3 621.2H380M364.3 625.1H380M364.3 629H380" stroke="#8a8e96" stroke-width="1"/>
<rect x="369.4" y="617.3" width="5.6" height="15.6" fill="#ffe65a" stroke="#e0a400" stroke-width="1"/>
<!-- refresh -->
<path d="M400.4 625.2L404.8 618.6L409.6 624.6L406.8 624.8Q406.4 628.6 409.6 632.4Q404.2 631.4 403.6 625Z" fill="url(#rf1)"/>
<path d="M417.8 627.4L413.2 633.6L408.6 627.8L411.4 627.6Q411.6 623.6 408.6 620Q414.2 620.8 414.8 627.4Z" fill="url(#rf2)"/>
<!-- filter input shadow -->
<!-- export sep -->
<path d="M630.6 615.6V634.4" stroke="#8392aa" stroke-width="1.1"/>
<g>
<rect x="688" y="615" width="15.6" height="15.6" fill="#f2f2f2" stroke="#a8a8a8" stroke-width="1"/>
<path d="M688 618.8H703.6M688 622.6H703.6M688 626.4H703.6M693.2 615V630.6M698.4 615V630.6" stroke="#a8a8a8" stroke-width="1"/>
<rect x="695.4" y="621.4" width="14.6" height="14" rx="1.4" fill="#5c89ab" stroke="#40698a" stroke-width="0.8"/>
<rect x="698.4" y="622.2" width="8.6" height="5.2" fill="#fbfbfc"/>
<rect x="699.4" y="630.6" width="6.4" height="4.6" fill="#dfe4ea"/>
</g>
<path d="M720.6 615.6V634.4" stroke="#8392aa" stroke-width="1.1"/>
<!-- wrap icon -->
<path d="M848.4 619.6H861.2M848.4 633.4H861.2M850.6 621.4V631.6" stroke="#34466a" stroke-width="1.1"/>
<path d="M848.8 623.4L850.6 620.8L852.4 623.4ZM848.8 629.6L850.6 632.2L852.4 629.6Z" fill="#34466a"/>
<text x="853.6" y="631.2" font-family="Liberation Sans" font-size="11" fill="#34466a">A</text>
<!-- panel toggle -->
<rect x="1494.6" y="616.6" width="15.8" height="15.6" fill="#fafafa" stroke="#3a3a3a" stroke-width="1.2"/>
<rect x="1505" y="616.6" width="5.4" height="15.6" fill="#4a4a4a"/>
<!-- result grid big icon -->
<path d="M1520 645.2L1530.8 655.6L1520 666Z" fill="#fff"/>
<rect x="1541.2" y="616" width="32.4" height="35" rx="2.4" fill="#f2f4f6"/>
<rect x="1544.2" y="620.4" width="26.6" height="27.2" fill="#083a86"/>
<path d="M1546 624.6h6.4M1554.2 624.6h6.4M1562.4 624.6h6.6M1546 629.6h6.4M1554.2 629.6h6.4M1562.4 629.6h6.6M1546 634.6h6.4M1554.2 634.6h6.4M1562.4 634.6h6.6M1546 639.6h6.4M1554.2 639.6h6.4M1562.4 639.6h6.6M1546 644.4h6.4M1554.2 644.4h6.4M1562.4 644.4h6.6" stroke="#fff" stroke-width="2.2"/>
<!-- form editor icon -->
<rect x="1541.2" y="701" width="32" height="35.6" rx="1.6" fill="#ececec"/>
<path d="M1541.6 736.2H1572.8" stroke="#c4c4c6" stroke-width="1.2"/>
<path d="M1543.8 706.4H1570.6" stroke="#c2c2c2" stroke-width="1.2"/>
<path d="M1544.2 706.4V732.6H1570.4V706.4" fill="none" stroke="#d2d2d2" stroke-width="0.9"/>
<path d="M1553.6 711.4H1569.4M1553.6 721.4H1569.4M1553.6 726.2H1561M1553.6 731.4H1569.4M1546.2 710.2H1551.6M1546.2 715.2H1551.6M1546.2 730.2H1551.6" stroke="#c4c4c4" stroke-width="1"/>
<path d="M1553.2 708.6V731.6" stroke="#d6d6d6" stroke-width="0.8"/>
<!-- field types icon -->
<rect x="1541.4" y="787.6" width="27.6" height="33.4" rx="1.4" fill="#ececec"/>
<path d="M1541.8 821H1568.6" stroke="#c6c6c6" stroke-width="1.2"/>
<path d="M1544.6 791.4H1556M1544.6 795.6H1556M1544.6 799.8H1566M1544.6 804H1566M1544.6 808.2H1566M1544.6 812.4H1566M1544.6 816.6H1566" stroke="#cdcdcd" stroke-width="1.1"/>
<path d="M1551 790V818M1558 799V818" stroke="#d8d8d8" stroke-width="0.8"/>
<circle cx="1566.2" cy="793.6" r="5.2" fill="#ededed" stroke="#cacaca" stroke-width="1.6"/>
<path d="M1570 797.4L1578 805.2" stroke="#d2d2d2" stroke-width="2.4" stroke-linecap="round"/>
<!-- down chevron -->
<path d="M1543 846.6L1555.6 858.8L1568.2 846.6" fill="none" stroke="#d2d2d2" stroke-width="4.4" stroke-linejoin="miter" opacity="0.85"/>
<!-- scroll thumb -->
<rect x="1508.6" y="728.6" width="2.2" height="21" fill="#6a6a6a"/>
<!-- info icon status -->
<circle cx="1505.6" cy="881.2" r="6" fill="#2a7fd4"/>
<path d="M1505.6 877.4V882.4" stroke="#fff" stroke-width="1.8"/>
<circle cx="1505.6" cy="884.8" r="1" fill="#fff"/>
<!-- bottom tab close -->
<path d="M371.4 878.2L379.8 886.6M379.8 878.2L371.4 886.6" stroke="#555" stroke-width="1.3"/>
</svg>

</body></html>
